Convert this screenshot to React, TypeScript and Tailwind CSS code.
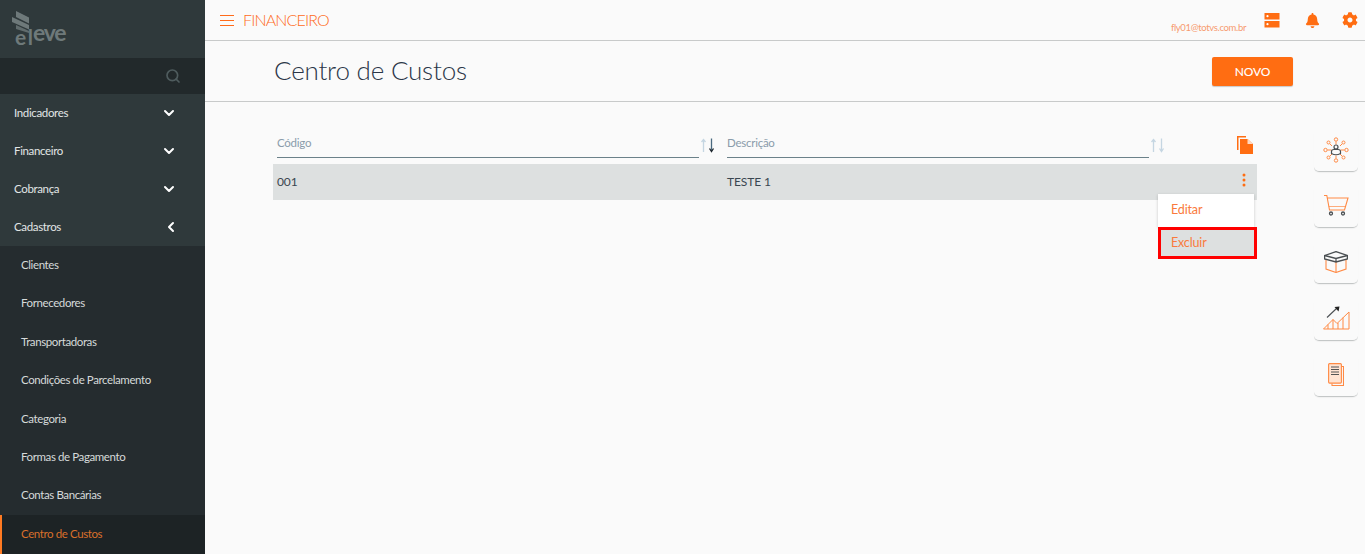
import React from "react";
import { ChevronDown, ChevronLeft, Search } from "lucide-react";
import { FaBell, FaCog } from "react-icons/fa";

const font = { fontFamily: '"Lato", "Liberation Sans", sans-serif' };

function Logo() {
  return (
    <div className="relative w-[60px] h-[36px] ml-[12px] mt-[11px] text-[#6e797a]">
      <svg className="absolute left-0 top-0" width="20" height="24" viewBox="0 0 20 24" fill="#6e797a">
        <path d="M4 0l13 6.500v6L4 6z" />
        <path d="M0 6l17 8v4.500L0 11z" />
        <path d="M4 14l13 6v2L4 18z" opacity=".8" />
      </svg>
      <span className="absolute left-[3px] top-[15px] text-[21px] font-bold leading-[22px] tracking-[1.500px]">el</span>
      <span className="absolute left-[21px] top-[9px] text-[23px] font-bold leading-[24px] tracking-[-1.200px]">eve</span>
    </div>
  );
}

function TopItem({ label, open }: { label: string; open?: boolean }) {
  return (
    <div className="flex items-center justify-between h-[38px] pl-[14px] pr-[28px] text-[11.500px] tracking-[-0.350px] text-[#e2e6e6]">
      <span>{label}</span>
      {open ? <ChevronLeft size={16} strokeWidth={3} className="text-white translate-x-[2px]" /> : <ChevronDown size={16} strokeWidth={3} className="text-white" />}
    </div>
  );
}

function SubItem({ label, active }: { label: string; active?: boolean }) {
  return (
    <div className={active ? "flex items-center flex-1 pl-[19px] pb-[1px] border-l-2 border-[#ff7a22] bg-[#1d2325] text-[11.500px] tracking-[-0.400px] text-[#d96f2b]" : "flex items-center h-[38.400px] pl-[21px] pb-[1px] text-[11.500px] tracking-[-0.400px] text-[#d6dada]"}>
      {label}
    </div>
  );
}

function SortIcon({ active }: { active?: boolean }) {
  return (
    <svg width="15" height="15" viewBox="0 0 15 15" fill="none" className="mt-[10px]">
      <path d="M2.500 14V1.500M0.500 4L2.500 1.500 4.500 4" stroke="#c5d6e2" strokeWidth="1.300" />
      <path d="M10.500 0.500V13" stroke={active ? "#4a6a80" : "#c5d6e2"} strokeWidth="1.300" />
      <path d="M8.500 10.500L10.500 13.500 12.500 10.500" stroke={active ? "#1c252b" : "#c5d6e2"} strokeWidth="1.300" />
    </svg>
  );
}

function RailCard({ children }: { children: React.ReactNode }) {
  return (
    <div className="flex items-center justify-center w-[44px] h-[44px] mb-[12.200px] rounded-[5px] border-b border-[#c4c7c7] shadow-[0_1px_1px_rgba(0,0,0,0.04)]">
      {children}
    </div>
  );
}

const O = "#ff8a45";
const K = "#4a4f52";

export default function App() {
  return (
    <div className="flex w-full h-screen overflow-hidden bg-[#fafafa] text-[#2f3b46]" style={font}>
      <aside className="flex flex-col w-[205px] shrink-0 bg-[#2f393b]">
        <div className="h-[58px]"><Logo /></div>
        <div className="flex items-center justify-end h-[36px] pr-[24px] bg-[#22292b]">
          <Search size={16} strokeWidth={2.500} className="text-[#4f5c5e]" />
        </div>
        <TopItem label="Indicadores" />
        <TopItem label="Financeiro" />
        <TopItem label="Cobrança" />
        <TopItem label="Cadastros" open />
        <div className="flex flex-col flex-1 bg-[#252c2f]">
          <SubItem label="Clientes" />
          <SubItem label="Fornecedores" />
          <SubItem label="Transportadoras" />
          <SubItem label="Condições de Parcelamento" />
          <SubItem label="Categoria" />
          <SubItem label="Formas de Pagamento" />
          <SubItem label="Contas Bancárias" />
          <SubItem label="Centro de Custos" active />
        </div>
      </aside>

      <main className="flex flex-col flex-1 min-w-0">
        <header className="flex items-center h-[41px] pl-[15px] pr-[7px] border-b border-[#c8caca]">
          <svg width="14" height="11" viewBox="0 0 14 11" fill="none" stroke="#ff6b1a" strokeWidth="1">
            <path d="M0 0.500h14M0 5.500h14M0 10.500h14" />
          </svg>
          <span className="ml-[9px] text-[16px] font-light tracking-[-0.850px] text-[#ff6b1a]">FINANCEIRO</span>
          <span className="ml-auto mt-[16px] text-[9.500px] tracking-[-0.350px] text-[#f79a70]">fly01@totvs.com.br</span>
          <svg className="ml-[18px]" width="16" height="16" viewBox="0 0 16 16" fill="#ff6d12">
            <path d="M0.500 1h15v6.500H0.500zM0.500 9h15v6.500H0.500z" />
            <circle cx="3.500" cy="4.200" r="1.100" fill="#fff" />
            <circle cx="3.500" cy="12.200" r="1.100" fill="#fff" />
          </svg>
          <FaBell size={15} className="ml-[25px] text-[#ff6d12]" />
          <FaCog size={16} className="ml-[22px] text-[#ff6d12]" />
        </header>

        <div className="flex items-center justify-between h-[61px] pl-[69px] pr-[72px] border-b border-[#c8caca]">
          <h1 className="mb-[2px] text-[26px] font-light tracking-[-0.200px] text-[#2b3648]">Centro de Custos</h1>
          <button className="mt-[1px] w-[81px] h-[29px] rounded-[2px] bg-[#ff6d12] text-[12px] tracking-[-0.200px] font-medium text-white shadow-[0_1px_1px_rgba(0,0,0,0.2)]">NOVO</button>
        </div>

        <div className="flex flex-1 pl-[68px] pr-[7px]">
          <section className="w-[984px] pt-[26px]">
            <div className="flex h-[30px]">
              <div className="ml-[4px] w-[422px] pt-[6px] border-b border-[#6b8189] text-[11.500px] tracking-[-0.250px] text-[#8a9cab]">Código</div>
              <div className="w-[28px] pl-[2px]"><SortIcon active /></div>
              <div className="w-[422px] pt-[6px] border-b border-[#6b8189] text-[11.500px] tracking-[-0.250px] text-[#8a9cab]">Descrição</div>
              <div className="pl-[2px]"><SortIcon /></div>
              <svg className="ml-[71px] mt-[8px]" width="16" height="18" viewBox="0 0 16 18">
                <path d="M0 0h9v1.500H1.500V14H0z" fill="#ff6d12" />
                <path d="M3 3h7.500L16 8v10H3z" fill="#ff6d12" />
                <path d="M10.500 3L16 8h-5.500z" fill="#ffd9c2" />
              </svg>
            </div>
            <div className="relative flex items-center h-[36px] mt-[6px] bg-[#dde0e0] text-[12px] tracking-[-0.100px] text-[#3a4650]">
              <span className="pl-[4px] w-[454px]">001</span>
              <span>TESTE 1</span>
              <svg className="absolute left-[969px] top-[9px]" width="4" height="14" viewBox="0 0 4 14" fill="#ff6d12">
                <circle cx="2" cy="2" r="1.500" /><circle cx="2" cy="7" r="1.500" /><circle cx="2" cy="12" r="1.500" />
              </svg>
              <div className="absolute left-[885px] top-[30px] w-[99px] text-[12.500px] tracking-[-0.150px] text-[#fa7a3c]">
                <div className="flex items-center w-[96px] h-[33px] pl-[13px] bg-white shadow-[0_1px_3px_rgba(0,0,0,0.2)]">Editar</div>
                <div className="flex items-center h-[32px] pl-[10px] bg-[#dde0e0] border-[3px] border-[#ff0000]">Excluir</div>
              </div>
            </div>
          </section>

          <aside className="ml-auto pt-[26px]">
            <RailCard>
              <svg width="26" height="26" viewBox="0 0 26 26" fill="none" stroke={O} strokeWidth="1">
                <circle cx="13" cy="2.500" r="1.700" /><circle cx="13" cy="23.500" r="1.700" /><circle cx="2.500" cy="13" r="1.700" /><circle cx="23.500" cy="13" r="1.700" />
                <circle cx="5.500" cy="5.500" r="1.500" /><circle cx="20.500" cy="5.500" r="1.500" /><circle cx="5.500" cy="20.500" r="1.500" /><circle cx="20.500" cy="20.500" r="1.500" />
                <path d="M13 4.500v3M13 18.500v3M4.500 13h4M17.500 13h4M7 7l2 2M19 7l-2 2M7 19l2-2M19 19l-2-2" />
                <circle cx="13" cy="10" r="2" stroke={K} strokeWidth="1.200" />
                <path d="M8.500 14.500Q8.500 12.500 11 12.500H15Q17.500 12.500 17.500 14.500V16.500Q13 19 8.500 16.500Z" stroke={K} strokeWidth="1.200" />
              </svg>
            </RailCard>
            <RailCard>
              <svg width="25" height="21" viewBox="0 0 25 21" fill="none" stroke={O} strokeWidth="1.100">
                <path d="M0 0.500H2.800L5.500 15H20.500L24 3H3.300" />
                <path d="M4.800 11.500H21.500" strokeWidth=".7" />
                <circle cx="7" cy="18.500" r="1.500" stroke={K} strokeWidth="1.300" />
                <circle cx="19" cy="18.500" r="1.500" stroke={K} strokeWidth="1.300" />
              </svg>
            </RailCard>
            <RailCard>
              <svg width="24" height="22" viewBox="0 0 24 22" fill="none" strokeWidth="1.100">
                <path d="M2 8v10L12 21.500 22 18V8M12 11v10.500" stroke={O} />
                <path d="M0.600 4.500L12 0.600 23.400 4.500V8L12 11 0.600 8zM0.600 4.500L12 7.500 23.400 4.500M12 7.500V11" stroke={K} strokeWidth="1.300" />
              </svg>
            </RailCard>
            <RailCard>
              <svg width="27" height="24" viewBox="0 0 27 24" fill="none" strokeWidth="1">
                <path d="M0.500 23L10 13.500 14 17.500 26 6V23ZM5 18.500V23M10 13.500V23M15 17V23M20 11.500V23" stroke={O} />
                <path d="M4 11.500L14 2" stroke={K} strokeWidth="1.100" />
                <path d="M11.500 1l5-.500L15.500 5.500z" fill="#222" stroke="none" />
              </svg>
            </RailCard>
            <RailCard>
              <svg width="16" height="23" viewBox="0 0 16 23" fill="none" strokeWidth="1.100">
                <path d="M13.500 3.500h2v19H4v-2" stroke={O} />
                <rect x="0.600" y="0.600" width="12.800" height="19.500" rx="1" stroke={O} fill="#ffe3d2" />
                <path d="M3 4h8M3 6.500h8M3 9h8M3 11.500h8" stroke="#555" />
              </svg>
            </RailCard>
          </aside>
        </div>
      </main>
    </div>
  );
}
